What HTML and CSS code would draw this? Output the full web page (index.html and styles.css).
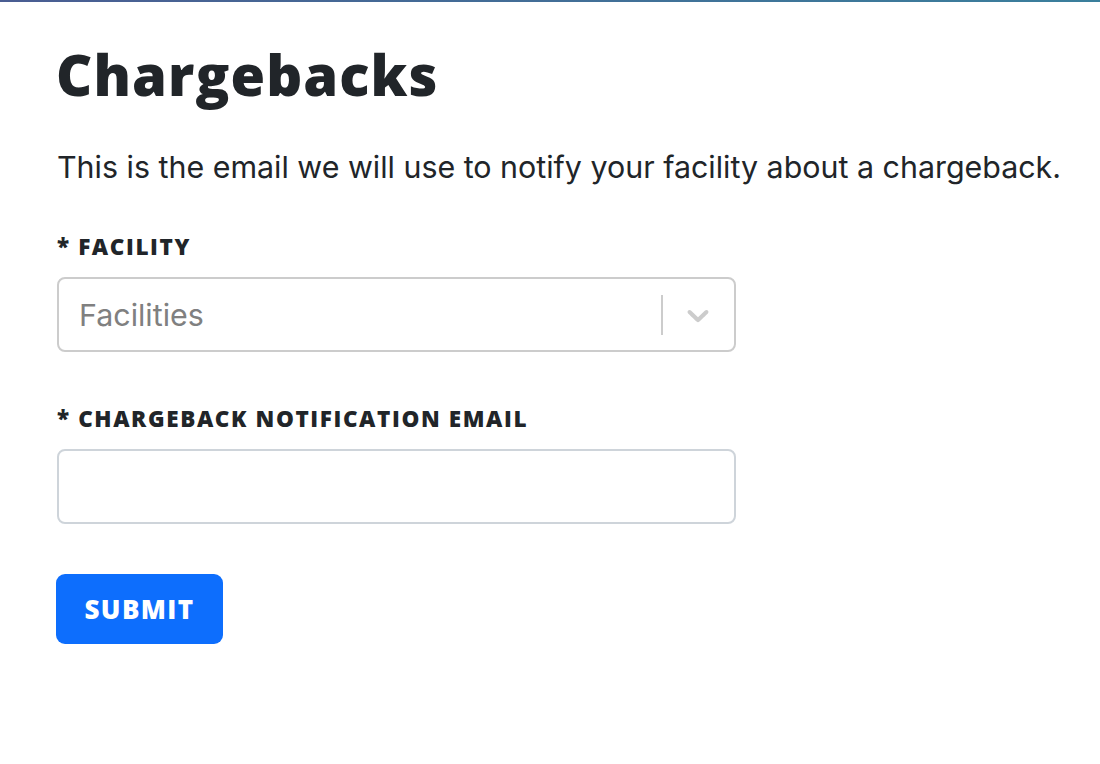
FILE: index.html
```html
<!DOCTYPE html>
<html>
<head>
<meta charset="utf-8">
<link rel="stylesheet" href="styles.css">
</head>
<body>
<div class="topbar"></div>
<main class="page">
  <h1 class="title">Chargebacks</h1>
  <p class="intro">This is the email we will use to notify your facility about a chargeback.</p>
  <form class="form">
    <div class="field">
      <label class="label">* FACILITY</label>
      <div class="select">
        <span class="placeholder">Facilities</span>
        <span class="indicators">
          <span class="sep"></span>
          <svg class="chev" width="36" height="36" viewBox="0 0 20 20"><path d="M4.516 7.548c.436-.446 1.043-.481 1.576 0L10 11.295l3.908-3.747c.533-.481 1.141-.446 1.574 0 .436.445.408 1.197 0 1.615-.406.418-4.695 4.502-4.695 4.502a1.095 1.095 0 0 1-1.576 0S4.924 9.581 4.516 9.163c-.409-.418-.436-1.170 0-1.615z" fill="#ccc"/></svg>
        </span>
      </div>
    </div>
    <div class="field field-last">
      <label class="label">* CHARGEBACK NOTIFICATION EMAIL</label>
      <input class="input" type="text">
    </div>
    <button class="submit" type="button">SUBMIT</button>
  </form>
</main>
</body>
</html>
```
FILE: styles.css
```css
html, body { margin: 0; padding: 0; background: #fff; }
body { font-family: Inter, "Noto Sans", sans-serif; color: #212529; }
.topbar { height: 2px; background: linear-gradient(90deg, #4a5d92, #3a7f9c); }
.page { padding: 0 0 0 57px; }
.title {
  font-family: "Open Sans", sans-serif;
  font-weight: 800;
  font-size: 56px;
  line-height: 68px;
  margin: 38px 0 0 -1px;
  letter-spacing: 1.1px;
  color: #212529;
}
.intro {
  font-size: 30.4px;
  line-height: 40px;
  margin: 39px 0 0 0;
}
.form { margin-top: 46px; display: flex; flex-direction: column; align-items: flex-start; }
.field { display: flex; flex-direction: column; margin-bottom: 53px; }
.field-last { margin-bottom: 50px; }
.label {
  font-family: "Open Sans", sans-serif;
  font-weight: 800;
  font-size: 22.5px;
  line-height: 28px;
  margin-bottom: 16px;
  letter-spacing: 1.6px;
  color: #212529;
}
.select {
  box-sizing: border-box;
  width: 679px; height: 75px;
  border: 2px solid #ccc; border-radius: 8px;
  display: flex; align-items: center; justify-content: space-between;
  padding-left: 20px;
}
.placeholder { font-size: 30.4px; color: #808080; }
.indicators { display: flex; align-items: center; height: 100%; }
.sep { width: 2px; height: 40px; background: #ccc; }
.chev { margin: 0 18px 0 17px; }
.input {
  box-sizing: border-box;
  width: 679px; height: 75px;
  border: 2px solid #ced4da; border-radius: 8px;
  font-size: 28px; padding: 0 20px; margin: 0;
}
.submit {
  margin: 0 0 0 -1px;
  background: #0d6efd; color: #fff; border: none; border-radius: 9px;
  font-family: "Open Sans", sans-serif; font-weight: 800;
  font-size: 26px; height: 70px; width: 167px; padding: 0;
  letter-spacing: 1.4px;
}
```
